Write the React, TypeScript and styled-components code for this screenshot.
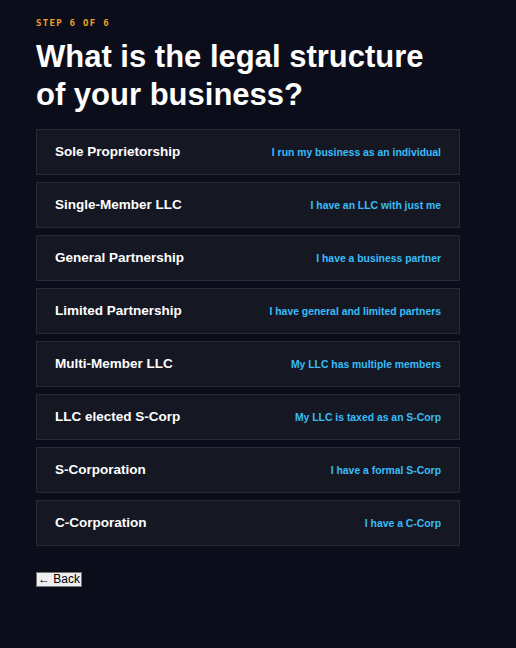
import React from "react";
import styled, { createGlobalStyle } from "styled-components";

const GlobalStyle = createGlobalStyle`
  html, body {
    margin: 0;
    padding: 0;
    background: #0b0e1a;
  }
  body {
    font-family: "Liberation Sans", Arial, sans-serif;
    color: #ffffff;
  }
`;

const Page = styled.div`
  min-height: 648px;
  padding: 16px 56px 40px 36px;
  box-sizing: border-box;
  background: #0b0e1a;
`;

const Step = styled.div`
  font-family: "DejaVu Sans Mono", monospace;
  font-size: 9px;
  font-weight: bold;
  letter-spacing: 1.3px;
  color: #f0a020;
  line-height: 12px;
  margin-top: 1px;
`;

const Title = styled.h1`
  margin: 9px 0 15px;
  font-size: 31px;
  font-weight: bold;
  line-height: 38px;
  color: #ffffff;
`;

const List = styled.div`
  display: flex;
  flex-direction: column;
  gap: 7px;
  width: 424px;
`;

const Option = styled.div`
  display: flex;
  align-items: center;
  justify-content: space-between;
  height: 46px;
  box-sizing: border-box;
  padding: 0 18px 0 18px;
  background: #151823;
  border: 1px solid #262a36;
  cursor: pointer;
`;

const Name = styled.span`
  font-size: 13.5px;
  font-weight: bold;
  color: #ffffff;
  margin-top: -2px;
`;

const Desc = styled.span`
  font-size: 10.4px;
  font-weight: bold;
  color: #38bdf8;
`;

const BackButton = styled.button`
  margin-top: 26px;
  padding: 0 1px;
  font-family: "Liberation Sans", Arial, sans-serif;
  font-size: 12px;
  line-height: 13px;
  color: #000000;
  background: #efefef;
  border: 1px solid #767676;
  border-radius: 0;
`;

const options = [
  { name: "Sole Proprietorship", desc: "I run my business as an individual" },
  { name: "Single-Member LLC", desc: "I have an LLC with just me" },
  { name: "General Partnership", desc: "I have a business partner" },
  { name: "Limited Partnership", desc: "I have general and limited partners" },
  { name: "Multi-Member LLC", desc: "My LLC has multiple members" },
  { name: "LLC elected S-Corp", desc: "My LLC is taxed as an S-Corp" },
  { name: "S-Corporation", desc: "I have a formal S-Corp" },
  { name: "C-Corporation", desc: "I have a C-Corp" },
];

const App = () => {
  return (
    <>
      <GlobalStyle />
      <Page>
        <Step>STEP 6 OF 6</Step>
        <Title>
          What is the legal structure
          <br />
          of your business?
        </Title>
        <List>
          {options.map((opt) => (
            <Option key={opt.name}>
              <Name>{opt.name}</Name>
              <Desc>{opt.desc}</Desc>
            </Option>
          ))}
        </List>
        <BackButton>← Back</BackButton>
      </Page>
    </>
  );
};

export default App;
